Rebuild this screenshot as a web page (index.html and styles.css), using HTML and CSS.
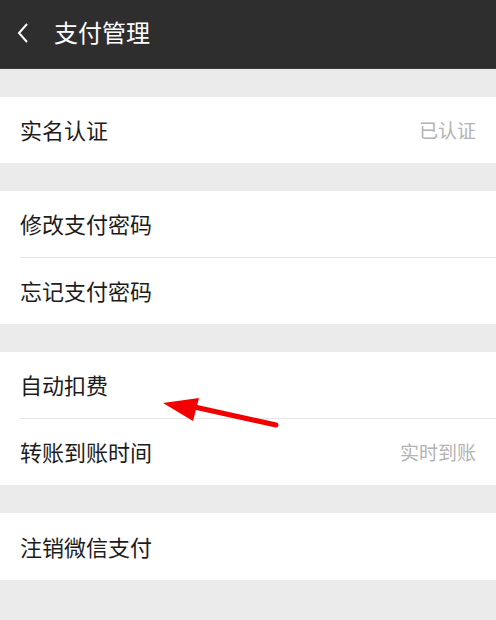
FILE: index.html
```html
<!DOCTYPE html>
<html>
<head>
<meta charset="utf-8">
<link rel="stylesheet" href="styles.css">
</head>
<body>
<div class="page">
  <header class="bar">
    <svg class="back" width="14" height="22" viewBox="0 0 14 22"><path d="M11 2 L3 11 L11 20" fill="none" stroke="#fff" stroke-width="2"/></svg>
    <span class="title">支付管理</span>
  </header>
  <section class="group">
    <div class="row"><span class="label">实名认证</span><span class="value">已认证</span></div>
  </section>
  <section class="group">
    <div class="row"><span class="label">修改支付密码</span></div>
    <div class="row"><span class="label">忘记支付密码</span></div>
  </section>
  <section class="group">
    <div class="row"><span class="label">自动扣费</span></div>
    <div class="row"><span class="label">转账到账时间</span><span class="value">实时到账</span></div>
  </section>
  <section class="group">
    <div class="row tall"><span class="label">注销微信支付</span></div>
  </section>
  <svg class="arrow" width="496" height="620" viewBox="0 0 496 620">
    <line x1="276" y1="425" x2="190" y2="406" stroke="#f20000" stroke-width="5" stroke-linecap="round"/>
    <polygon points="163,403 199,398 193,421" fill="#f20000"/>
  </svg>
</div>
</body>
</html>
```
FILE: styles.css
```css
html, body {
  margin: 0;
  padding: 0;
}
body {
  background: #ebebeb;
  font-family: "Noto Sans CJK SC", "Noto Sans", sans-serif;
}
.page {
  position: relative;
  width: 496px;
  height: 620px;
  overflow: hidden;
  background: #ebebeb;
}
.bar {
  height: 69px;
  background: #2e2e2e;
  display: flex;
  align-items: center;
  padding-left: 16px;
  box-sizing: border-box;
  border-bottom: 1px solid #3a3a3a;
}
.back {
  display: block;
  margin-right: 24px;
  margin-top: -2px;
}
.title {
  color: #fff;
  font-size: 24px;
  line-height: 1;
  margin-top: -4px;
}
.group {
  margin-top: 28px;
  background: #fff;
}
.row {
  height: 66px;
  display: flex;
  align-items: center;
  justify-content: space-between;
  margin-left: 20px;
  padding-right: 20px;
  box-sizing: border-box;
}
.row + .row {
  border-top: 1px solid #e6e6e6;
  height: 67px;
}
.row.tall {
  height: 67px;
}
.label {
  font-size: 22px;
  color: #1c1c1c;
  line-height: 1;
  margin-top: -2px;
}
.value {
  font-size: 19px;
  color: #b3b3b3;
  line-height: 1;
  margin-top: -2px;
}
.arrow {
  position: absolute;
  left: 0;
  top: 0;
}
```
